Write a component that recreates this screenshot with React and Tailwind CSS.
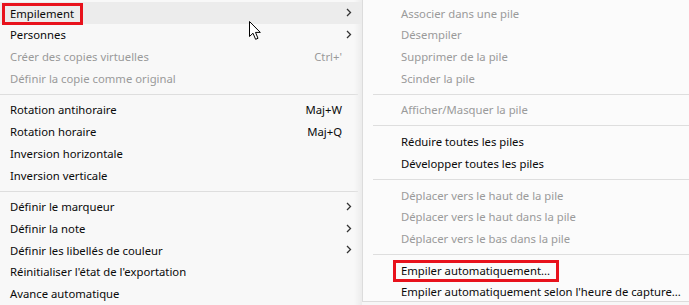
import React from "react";

const leftGroups = [
  [
    { label: "Empilement", sub: true, hover: true, boxed: true },
    { label: "Personnes", sub: true },
    { label: "Créer des copies virtuelles", disabled: true, shortcut: "Ctrl+'" },
    { label: "Définir la copie comme original", disabled: true },
  ],
  [
    { label: "Rotation antihoraire", shortcut: "Maj+W" },
    { label: "Rotation horaire", shortcut: "Maj+Q" },
    { label: "Inversion horizontale" },
    { label: "Inversion verticale" },
  ],
  [
    { label: "Définir le marqueur", sub: true },
    { label: "Définir la note", sub: true },
    { label: "Définir les libellés de couleur", sub: true },
    { label: "Réinitialiser l'état de l'exportation" },
    { label: "Avance automatique" },
  ],
];

const rightGroups = [
  [
    { label: "Associer dans une pile", disabled: true },
    { label: "Désempiler", disabled: true },
    { label: "Supprimer de la pile", disabled: true },
    { label: "Scinder la pile", disabled: true },
  ],
  [{ label: "Afficher/Masquer la pile", disabled: true }],
  [{ label: "Réduire toutes les piles" }, { label: "Développer toutes les piles" }],
  [
    { label: "Déplacer vers le haut de la pile", disabled: true },
    { label: "Déplacer vers le haut dans la pile", disabled: true },
    { label: "Déplacer vers le bas dans la pile", disabled: true },
  ],
  [{ label: "Empiler automatiquement...", boxed: true }, { label: "Empiler automatiquement selon l'heure de capture..." }],
];

const Chevron = () => (
  <svg width="6" height="9" viewBox="0 0 6 9" className="block">
    <polyline points="1,1 4.5,4.5 1,8" fill="none" stroke="#333" strokeWidth="1.3" />
  </svg>
);

const Cursor = () => (
  <svg width="13" height="20" viewBox="0 0 13 20" className="absolute left-[249px] top-[21px] pointer-events-none">
    <path
      d="M0.5 0.5 L0.5 15.5 L4 12.2 L6.6 18.3 L9 17.3 L6.5 11.4 L11.3 11.4 Z"
      fill="#fff"
      stroke="#000"
      strokeWidth="1"
      strokeLinejoin="miter"
    />
  </svg>
);

const Row = ({ item, withSlot }) => (
  <div
    className={`relative flex h-[21.7px] items-center pr-[10px] ${withSlot ? "pl-[10px]" : "pl-[38px]"} ${
      item.hover ? "bg-[#ececec] bg-[radial-gradient(#d8d8d8_0.6px,transparent_0.7px)] bg-[length:4px_4px]" : ""
    }`}
  >
    <span className={`flex-1 whitespace-nowrap pt-[1px] ${item.disabled ? "text-[#9a9a9a]" : "text-[#0a0a0a]"}`}>
      {item.boxed ? (
        <span className="relative">
          {item.label}
          <span className="absolute -left-[8px] -right-[9px] -top-[3px] -bottom-[4px] border-[3px] border-[#e8121c]" />
        </span>
      ) : (
        item.label
      )}
    </span>
    {item.shortcut && (
      <span className={`pt-[1px] ${item.disabled ? "text-[#9a9a9a]" : "text-[#0a0a0a]"}`}>{item.shortcut}</span>
    )}
    {withSlot && <span className="flex w-[10px] justify-end">{item.sub && <Chevron />}</span>}
  </div>
);

const Separator = ({ left }) => (
  <div className={`h-[10px] pt-[5px] ${left ? "pr-[4px]" : "pl-[10px]"}`}>
    <div className="h-px bg-[#dedede]" />
  </div>
);

export default function App() {
  return (
    <div
      className="relative flex h-[305px] w-[689px] overflow-hidden bg-[#f7f7f7] text-[11.3px] leading-none"
      style={{ fontFamily: "'Noto Sans', 'Open Sans', sans-serif" }}
    >
      <div className="relative w-[362px] shrink-0 bg-[#f8f8f8] pt-[2px]">
        {leftGroups.map((group, gi) => (
          <React.Fragment key={gi}>
            {gi > 0 && <Separator left />}
            {group.map((item, i) => (
              <Row key={i} item={item} withSlot />
            ))}
          </React.Fragment>
        ))}
        <div className="absolute right-0 top-0 h-full w-[8px] bg-gradient-to-r from-transparent to-[#ececec]" />
      </div>
      <div className="h-[302px] flex-1 border-b border-l border-[#dcdcdc] bg-[#fbfbfb] pt-[2px]">
        {rightGroups.map((group, gi) => (
          <React.Fragment key={gi}>
            {gi > 0 && <Separator />}
            {group.map((item, i) => (
              <Row key={i} item={item} />
            ))}
          </React.Fragment>
        ))}
      </div>
      <Cursor />
    </div>
  );
}
